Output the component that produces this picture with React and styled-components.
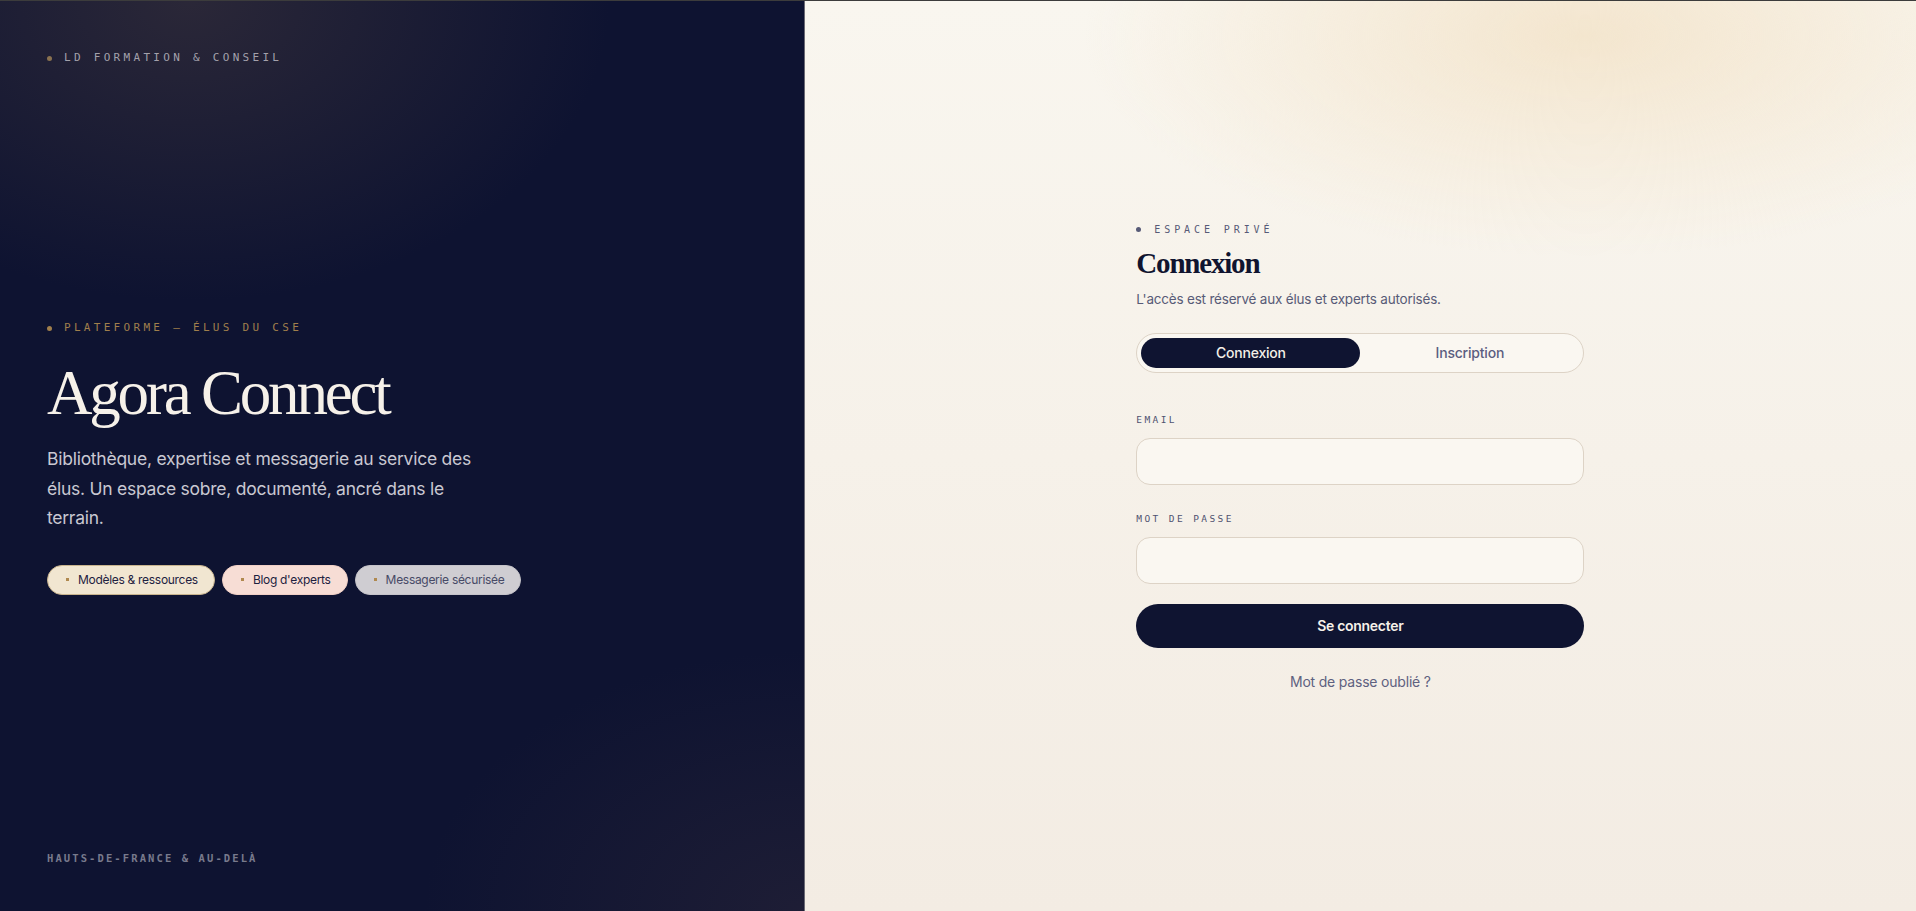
import React from "react";
import styled, { createGlobalStyle } from "styled-components";

const Global = createGlobalStyle`
  * { box-sizing: border-box; }
  html, body { margin: 0; padding: 0; height: 100%; }
  body { font-family: Inter, "Noto Sans", sans-serif; border-top: 1px solid #3c3c3c; }
  #root { height: 100%; }
`;

const mono = `"DejaVu Sans Mono", "Liberation Mono", monospace`;
const serif = `"Liberation Serif", "DejaVu Serif", serif`;
const sans = `Inter, "Noto Sans", sans-serif`;

const Page = styled.div`
  display: grid;
  grid-template-columns: 42% 1fr;
  height: 910px;
  overflow: hidden;
`;

const Left = styled.aside`
  display: flex;
  flex-direction: column;
  justify-content: space-between;
  padding: 47px 47px 43px;
  background:
    radial-gradient(ellipse 420px 300px at 190px 0px, rgba(52, 46, 58, 0.75), rgba(52, 46, 58, 0) 100%),
    radial-gradient(ellipse 380px 260px at 100% 100%, rgba(40, 36, 56, 0.6), rgba(40, 36, 56, 0) 100%),
    #0e1331;
  border-right: 1px solid #6b6a74;
`;

const Eyebrow = styled.div`
  display: flex;
  align-items: center;
  gap: ${(p) => p.$gap || 10}px;
  font-family: ${mono};
  font-size: ${(p) => p.$size || 11}px;
  letter-spacing: ${(p) => p.$ls || 3.3}px;
  text-transform: uppercase;
  line-height: 20px;
  color: ${(p) => p.$color};
  &::before {
    content: "";
    width: 5px;
    height: 5px;
    border-radius: 50%;
    background: ${(p) => p.$dot};
    flex: none;
  }
`;

const Footer = styled.div`
  font-family: ${mono};
  font-size: 10.5px;
  letter-spacing: 2.1px;
  line-height: 20px;
  color: #787a8c;
  font-weight: bold;
`;

const Hero = styled.div`
  display: flex;
  flex-direction: column;
  margin-top: -3px;
`;

const Title = styled.h1`
  margin: 17px 0 0;
  font-family: ${serif};
  font-weight: normal;
  font-size: 63px;
  line-height: 76px;
  letter-spacing: -3.2px;
  color: #f6f1e9;
`;

const Lead = styled.p`
  margin: 13px 0 0;
  max-width: 440px;
  font-family: ${sans};
  font-size: 17.5px;
  line-height: 29.5px;
  letter-spacing: -0.25px;
  color: #c9c8d2;
`;

const Chips = styled.div`
  display: flex;
  gap: 7px;
  margin-top: 32px;
`;

const Chip = styled.span`
  display: inline-flex;
  align-items: center;
  gap: 9px;
  height: 30px;
  padding: 0 16px 0 18px;
  border-radius: 15px;
  font-family: ${sans};
  font-size: 12px;
  letter-spacing: -0.3px;
  color: ${(p) => p.$fg};
  background: ${(p) => p.$bg};
  border: 1px solid ${(p) => p.$border};
  &::before {
    content: "";
    width: 3px;
    height: 3px;
    background: #b0894f;
    flex: none;
  }
`;

const Right = styled.main`
  display: flex;
  align-items: center;
  justify-content: center;
  background:
    radial-gradient(ellipse 500px 220px at 780px 35px, rgba(243, 228, 203, 0.9), rgba(243, 228, 203, 0) 100%),
    linear-gradient(180deg, #f9f6ef 0%, #f3ece3 100%);
`;

const Form = styled.form`
  width: 448px;
  display: flex;
  flex-direction: column;
  margin-top: -3px;
`;

const Heading = styled.h2`
  margin: 5px 0 0;
  font-family: ${serif};
  font-weight: bold;
  font-size: 29px;
  line-height: 36px;
  letter-spacing: -1.2px;
  color: #10142f;
`;

const Sub = styled.p`
  margin: 8px 0 0;
  font-family: ${sans};
  font-size: 13.5px;
  line-height: 20px;
  letter-spacing: -0.2px;
  color: #585b77;
`;

const Tabs = styled.div`
  display: grid;
  grid-template-columns: 1fr 1fr;
  margin-top: 24px;
  padding: 4px;
  height: 40px;
  border-radius: 20px;
  background: #faf7f1;
  border: 1px solid #ddd3c6;
`;

const Tab = styled.button`
  border: 0;
  border-radius: 16px;
  font-family: ${sans};
  font-size: 14px;
  font-weight: 500;
  letter-spacing: -0.2px;
  cursor: pointer;
  background: ${(p) => (p.$active ? "#0f1431" : "transparent")};
  color: ${(p) => (p.$active ? "#f4f0e8" : "#5b5e80")};
`;

const Field = styled.label`
  display: flex;
  flex-direction: column;
  gap: 10px;
  margin-top: ${(p) => p.$mt}px;
`;

const Label = styled.span`
  font-family: ${mono};
  font-size: 9.5px;
  letter-spacing: 2.4px;
  line-height: 16px;
  text-transform: uppercase;
  color: #4f5270;
`;

const Input = styled.input`
  height: 47px;
  border-radius: 14px;
  border: 1px solid #ddd3c6;
  background: #faf7f1;
  padding: 0 16px;
  font-family: ${sans};
  font-size: 14px;
  outline: none;
`;

const Submit = styled.button`
  margin-top: 20px;
  height: 44px;
  border: 0;
  border-radius: 22px;
  background: #0f1431;
  color: #f6f1e9;
  font-family: ${sans};
  font-size: 14px;
  font-weight: 600;
  letter-spacing: -0.3px;
  cursor: pointer;
`;

const Forgot = styled.a`
  margin-top: 25px;
  text-align: center;
  font-family: ${sans};
  font-size: 14px;
  letter-spacing: -0.2px;
  color: #5e6180;
  text-decoration: none;
`;

export default function App() {
  return (
    <>
      <Global />
      <Page>
        <Left>
          <Eyebrow $color="#a3a1ab" $dot="#8a7250" $gap={12}>
            LD Formation &amp; Conseil
          </Eyebrow>
          <Hero>
            <Eyebrow $color="#a07f4c" $dot="#a07f4c" $gap={12}>
              Plateforme — élus du CSE
            </Eyebrow>
            <Title>Agora Connect</Title>
            <Lead>
              Bibliothèque, expertise et messagerie au service des élus. Un espace sobre, documenté, ancré dans le
              terrain.
            </Lead>
            <Chips>
              <Chip $bg="#f1e6d1" $border="#c9b48e" $fg="#1d2140">Modèles &amp; ressources</Chip>
              <Chip $bg="#f7ddd5" $border="#f0cfc5" $fg="#1d2140">Blog d'experts</Chip>
              <Chip $bg="#cfcdd2" $border="#c5c3c9" $fg="#474a66">Messagerie sécurisée</Chip>
            </Chips>
          </Hero>
          <Footer>HAUTS-DE-FRANCE &amp; AU-DELÀ</Footer>
        </Left>
        <Right>
          <Form onSubmit={(e) => e.preventDefault()}>
            <Eyebrow $color="#575a77" $dot="#575a77" $size={10} $ls={3.9} $gap={13}>
              Espace privé
            </Eyebrow>
            <Heading>Connexion</Heading>
            <Sub>L'accès est réservé aux élus et experts autorisés.</Sub>
            <Tabs>
              <Tab type="button" $active>Connexion</Tab>
              <Tab type="button">Inscription</Tab>
            </Tabs>
            <Field $mt={39}>
              <Label>Email</Label>
              <Input type="email" />
            </Field>
            <Field $mt={26}>
              <Label>Mot de passe</Label>
              <Input type="password" />
            </Field>
            <Submit type="submit">Se connecter</Submit>
            <Forgot href="#">Mot de passe oublié ?</Forgot>
          </Form>
        </Right>
      </Page>
    </>
  );
}
